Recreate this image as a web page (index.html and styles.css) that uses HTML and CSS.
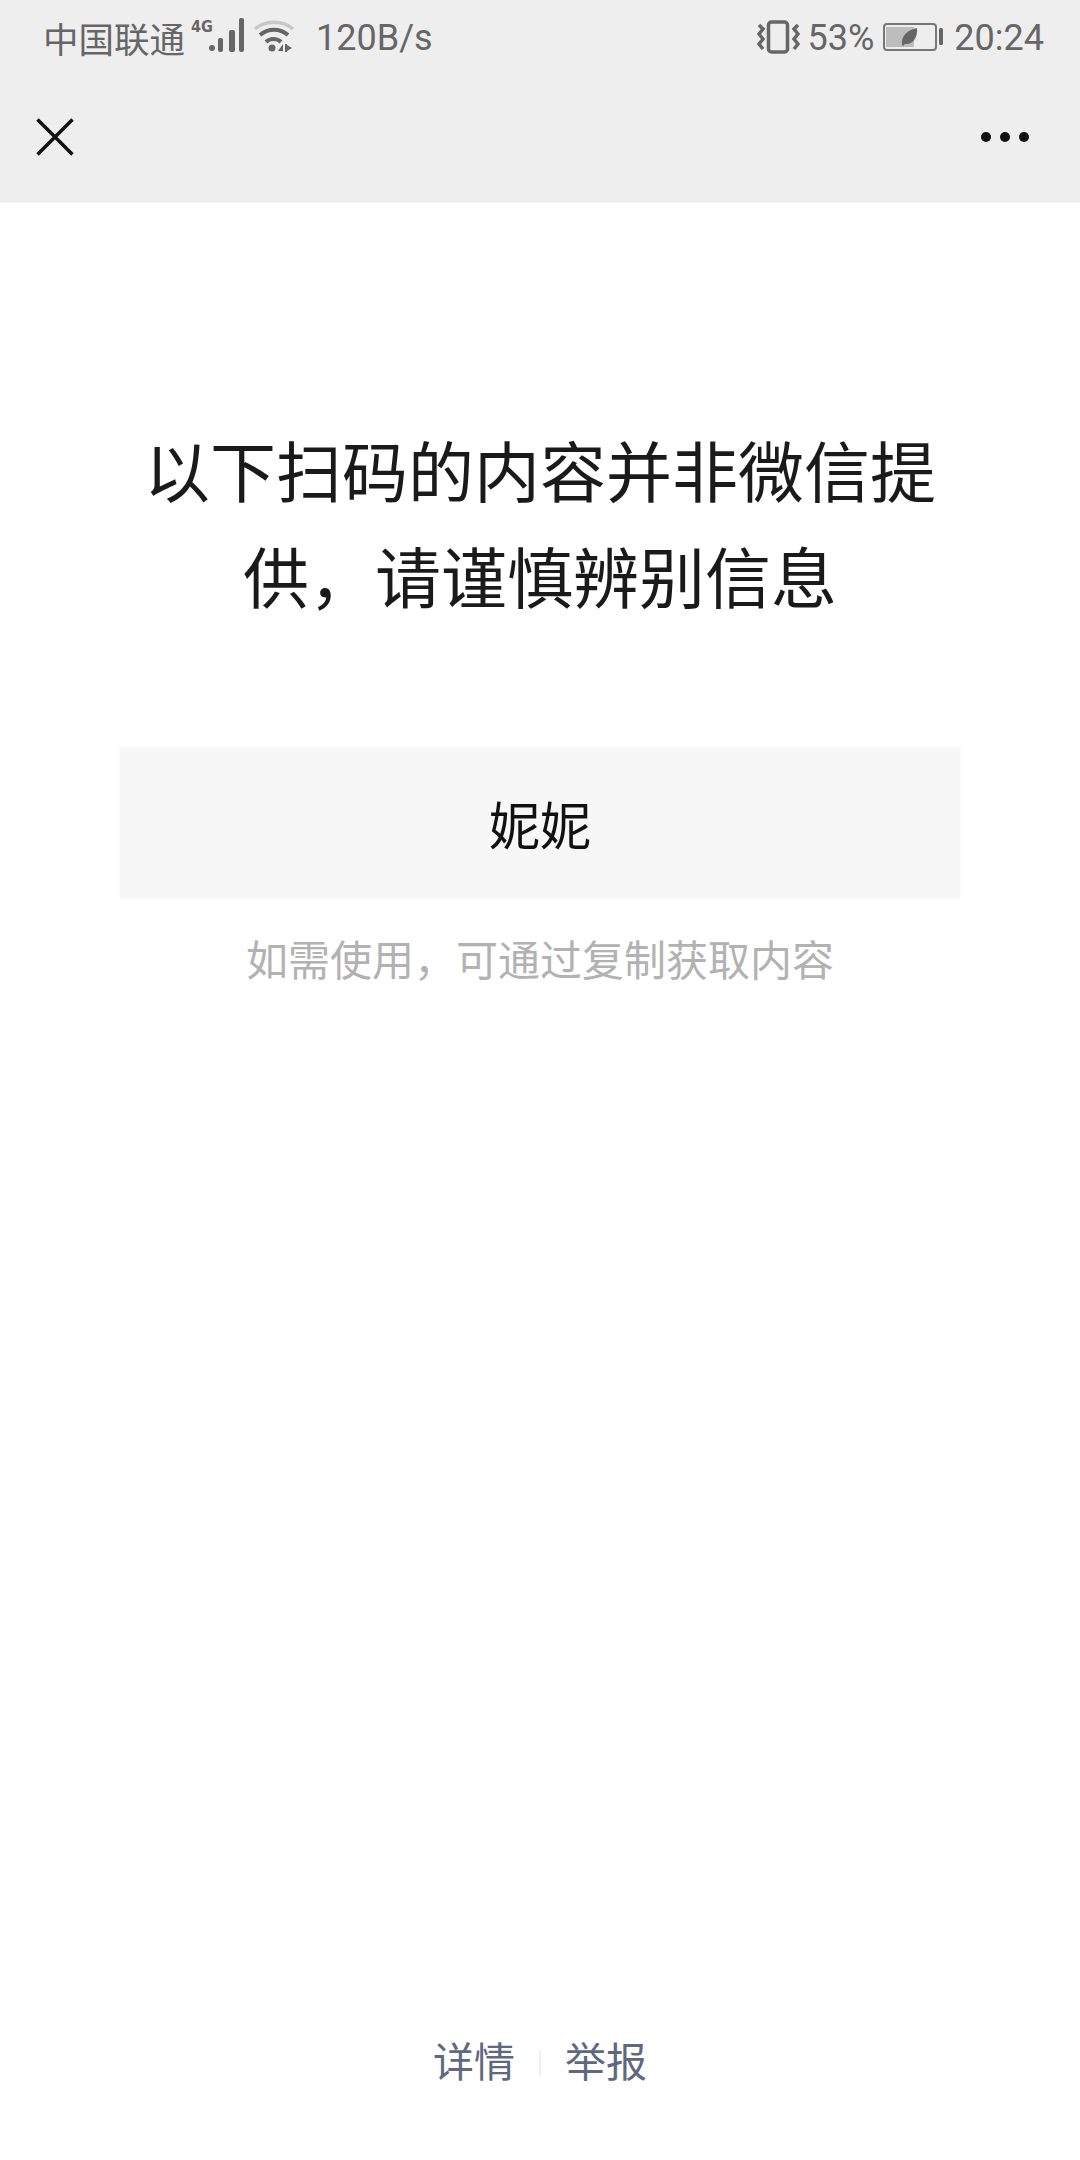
FILE: index.html
```html
<!DOCTYPE html>
<html lang="zh-CN">

<head>
    <meta charset="UTF-8">
    <meta name="viewport" content="width=device-width, initial-scale=1.0">
    <title>扫码内容</title>
    <link rel="stylesheet" href="styles.css">
</head>

<body>
    <div class="page">
        <div class="top">
            <div class="status">
                <div class="status-left">
                    <span class="carrier">中国联通</span>
                    <span class="net">4G</span>
                    <svg class="signal" width="35" height="34" viewBox="0 0 35 34">
                        <circle cx="3" cy="30" r="3" fill="#666"/>
                        <rect x="9" y="20" width="5" height="14" rx="2" fill="#666"/>
                        <rect x="20" y="12" width="6" height="22" rx="2" fill="#666"/>
                        <rect x="30" y="0" width="5" height="34" rx="2" fill="#666"/>
                    </svg>
                    <svg class="wifi" width="40" height="32" viewBox="0 0 40 32">
                        <path d="M1 9 C11 0 29 0 39 9" fill="none" stroke="#c8c8c8" stroke-width="3.5"/>
                        <path d="M6 15 C14 8 26 8 34 15" fill="none" stroke="#666" stroke-width="4"/>
                        <path d="M12 22 C16 18 23 18 27 22" fill="none" stroke="#666" stroke-width="4"/>
                        <circle cx="18" cy="28" r="3.5" fill="#666"/>
                        <path d="M24 31 L29 24 V31 Z M31 24 H33 V32 H31 Z M33 25 L38 28 L33 31 Z" fill="#666"/>
                    </svg>
                    <span class="speed">120B/s</span>
                </div>
                <div class="status-right">
                    <svg class="vibrate" width="43" height="34" viewBox="0 0 43 34">
                        <rect x="11.5" y="2" width="19" height="30" rx="3" fill="none" stroke="#666" stroke-width="3.5"/>
                        <path d="M2 5 L6 9 L2 14 L6 19 L2 24 L6 29" fill="none" stroke="#666" stroke-width="3.5"/>
                        <path d="M41 5 L37 9 L41 14 L37 19 L41 24 L37 29" fill="none" stroke="#666" stroke-width="3.5"/>
                    </svg>
                    <span class="percent">53%</span>
                    <svg class="battery" width="60" height="28" viewBox="0 0 60 28">
                        <rect x="1" y="1" width="52" height="26" rx="3" fill="none" stroke="#777" stroke-width="2"/>
                        <rect x="3" y="4" width="28" height="20" fill="#bdbdbd"/>
                        <rect x="56" y="5" width="4" height="17" rx="1.5" fill="#666"/>
                        <path d="M19 22 C18 13 24 7 34 5 C35 14 30 22 22 21 L20 23 Z" fill="#666"/>
                    </svg>
                    <span class="clock">20:24</span>
                </div>
            </div>
            <div class="nav">
                <svg class="close" width="38" height="38" viewBox="0 0 38 38">
                    <path d="M1.5 1.5 L36.5 36.5 M36.5 1.5 L1.5 36.5" stroke="#111" stroke-width="3.5"/>
                </svg>
                <div class="more">
                    <i></i><i></i><i></i>
                </div>
            </div>
        </div>

        <div class="content">
            <h1 class="title">以下扫码的内容并非微信提供&#65292;请谨慎辨别信息</h1>
            <div class="code-text">妮妮</div>
            <p class="hint">如需使用&#65292;可通过复制获取内容</p>
        </div>

        <div class="links">
            <a class="link">详情</a>
            <span class="line"></span>
            <a class="link">举报</a>
        </div>
    </div>
</body>

</html>
```

FILE: styles.css
```css
* {
    padding: 0;
    margin: 0;
    box-sizing: border-box;
}

body {
    background-color: white;
    font-family: "Roboto", "Noto Sans CJK SC", sans-serif;
}

.page {
    width: 1080px;
    height: 2160px;
    display: flex;
    flex-direction: column;
}

.top {
    height: 203px;
    background-color: #eeeeee;
    border-bottom: 1px solid #f3f3f3;
}

.status {
    height: 76px;
    padding: 0 36px 0 43px;
    display: flex;
    justify-content: space-between;
    align-items: center;
    color: #666;
    font-size: 36px;
}

.status-left,
.status-right {
    display: flex;
    align-items: center;
}

.carrier {
    margin-top: -2px;
    font-size: 35.5px;
}

.net {
    width: 18px;
    margin: -24px 0 0 6px;
    font-family: "DejaVu Sans", sans-serif;
    font-size: 16px;
    font-stretch: condensed;
    font-weight: bold;
}

.signal {
    margin-top: -6px;
}

.wifi {
    margin: -4px 0 0 10px;
}

.speed {
    margin-left: 22px;
}

.vibrate {
    margin: -3px 8px 0 0;
}

.battery {
    margin: -3px 11px 0 9px;
}

.nav {
    height: 125px;
    padding: 0 51px 0 36px;
    display: flex;
    justify-content: space-between;
    align-items: center;
}

.close {
    margin-top: -4px;
}

.more {
    display: flex;
    gap: 9px;
    margin-top: -4px;
}

.more i {
    width: 10px;
    height: 10px;
    border-radius: 50%;
    background-color: #111;
}

.content {
    padding: 219px 120px 0;
    text-align: center;
}

.title {
    font-size: 66px;
    font-weight: normal;
    line-height: 106px;
    color: #1a1a1a;
}

.code-text {
    height: 150px;
    margin-top: 114px;
    background-color: #f7f7f7;
    box-shadow: 0 0 6px #f7f7f7;
    font-size: 51px;
    line-height: 160px;
    color: #111;
}

.hint {
    margin-top: 34px;
    font-size: 42px;
    line-height: 60px;
    color: #b2b2b2;
}

.links {
    margin-top: auto;
    padding-bottom: 67px;
    display: flex;
    justify-content: center;
    align-items: center;
    gap: 24px;
}

.link {
    font-size: 41px;
    line-height: 60px;
    color: #5f6880;
}

.line {
    width: 2px;
    height: 26px;
    background-color: #f0f0f0;
}
```
